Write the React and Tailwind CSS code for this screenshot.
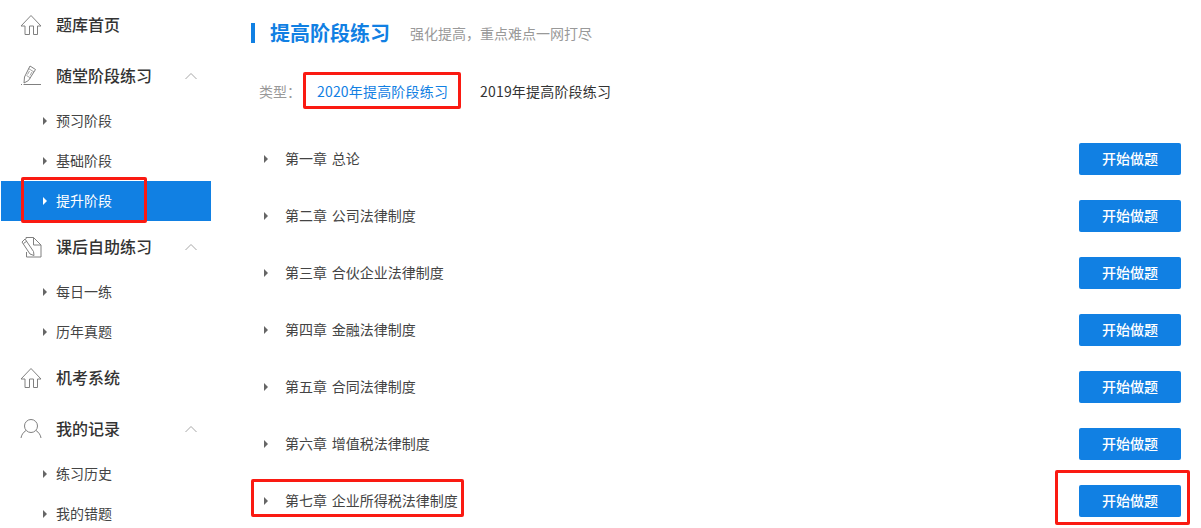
const font = { fontFamily: '"Noto Sans CJK SC", "Liberation Sans", sans-serif' };

function Home() {
  return (
    <svg width="22" height="22" viewBox="0 0 22 22" fill="none" stroke="#808080" strokeWidth="1">
      <path d="M11 1.500 1 12h4v8.500h4.500V12h4v8.500h4V12H21Z" />
    </svg>
  );
}
function Pen() {
  return (
    <svg width="22" height="22" viewBox="0 0 22 22" fill="none" stroke="#808080" strokeWidth="1">
      <path d="M10 1 15.500 4.500 8.500 15.500 4 18 4.500 12Z" />
      <path d="M8.500 3.500 14 7M6.500 10.500l4 2.500M9.500 6l-2 3.500M12 7l-2 3.500" strokeOpacity="0.7" />
      <path d="M1 19.500h1M3.500 19.500H21" />
    </svg>
  );
}
function Doc() {
  return (
    <svg width="22" height="22" viewBox="0 0 22 22" fill="none" stroke="#808080" strokeWidth="1">
      <path d="M6 3V1.500h7.500L21 9v12H6.500v-5" />
      <path d="M13.500 1.500V9H21" />
      <path d="M2 6l3-3 8.500 12.500.5 4-4-1.500Z" />
      <path d="M3.500 7.500 7 5" />
    </svg>
  );
}
function User() {
  return (
    <svg width="22" height="22" viewBox="0 0 22 22" fill="none" stroke="#808080" strokeWidth="1">
      <circle cx="11" cy="8" r="6.500" />
      <path d="M1 20c.5-3 2-5.500 5-7.500M21 20c-.5-3-2-5.500-5-7.500" />
    </svg>
  );
}
function Chevron() {
  return (
    <svg width="12" height="7" viewBox="0 0 12 7" fill="none" stroke="#a6a6a6" strokeWidth="1" className="absolute right-[14px] top-1/2 -translate-y-1/2">
      <path d="M.5 6.500 6 1l5.500 5.500" />
    </svg>
  );
}
function Caret({ white }) {
  return (
    <span className={`border-y-[4px] border-l-[4px] border-y-transparent ${white ? "border-l-white" : "border-l-[#666666]"}`} />
  );
}
function Head({ icon, text, open, h = "h-[51px]" }) {
  return (
    <div className={`relative flex ${h} items-center pl-[19px]`}>
      <span className="flex w-[36px]">{icon}</span>
      <span className="pb-[2px] text-[16px] font-medium text-[#333333]">{text}</span>
      {open && <Chevron />}
    </div>
  );
}
function Sub({ text, active }) {
  return (
    <div className={`flex h-10 items-center pl-[42px] text-[14px] ${active ? "bg-[#1180e3] text-white" : "text-[#444444]"}`}>
      <span className="flex w-[13px]"><Caret white={active} /></span>
      <span className="pb-[2px]">{text}</span>
    </div>
  );
}
const chapters = [
  "第一章 总论",
  "第二章 公司法律制度",
  "第三章 合伙企业法律制度",
  "第四章 金融法律制度",
  "第五章 合同法律制度",
  "第六章 增值税法律制度",
  "第七章 企业所得税法律制度",
];
function Mark({ className }) {
  return <div className={`pointer-events-none absolute rounded-[2px] border-[3px] border-[#fa1a12] ${className}`} />;
}

export default function App() {
  return (
    <div style={font} className="relative flex h-[528px] w-[1201px] overflow-hidden bg-white">
      <aside className="ml-px w-[210px] shrink-0">
        <Head icon={<Home />} text="题库首页" h="h-[50px]" />
        <Head icon={<Pen />} text="随堂阶段练习" open />
        <Sub text="预习阶段" />
        <Sub text="基础阶段" />
        <Sub text="提升阶段" active />
        <Head icon={<Doc />} text="课后自助练习" open />
        <Sub text="每日一练" />
        <Sub text="历年真题" />
        <Head icon={<Home />} text="机考系统" h="h-[52px]" />
        <Head icon={<User />} text="我的记录" open h="h-[50px]" />
        <Sub text="练习历史" />
        <Sub text="我的错题" />
      </aside>
      <main className="ml-10 flex-1 pr-5">
        <div className="mt-[23px] flex h-5 items-center">
          <span className="h-5 w-1 bg-[#1180e3]" />
          <h1 className="ml-[15px] text-[20px] font-bold text-[#1180e3]">提高阶段练习</h1>
          <span className="ml-[20px] text-[14px] text-[#999999]">强化提高，重点难点一网打尽</span>
        </div>
        <div className="mt-[28px] flex h-10 items-center">
          <span className="ml-2 w-[58px] text-[14px] text-[#999999]">类型：</span>
          <span className="text-[14px] tracking-[0.18px] text-[#1180e3]">2020年提高阶段练习</span>
          <span className="ml-[32px] text-[14px] tracking-[0.18px] text-[#333333]">2019年提高阶段练习</span>
        </div>
        <div className="mt-[32px] flex flex-col gap-[25px]">
          {chapters.map((c) => (
            <div key={c} className="flex h-8 items-center">
              <span className="ml-[13px] flex w-[21px]"><Caret /></span>
              <span className="pb-[2px] text-[14px] text-[#444444] [word-spacing:1.5px]">{c}</span>
              <button className="ml-auto h-8 w-[102px] rounded-[2px] bg-[#1180e3] pb-[1px] text-[14px] font-medium text-white">开始做题</button>
            </div>
          ))}
        </div>
      </main>
      <Mark className="left-[21px] top-[177px] h-[46px] w-[126px]" />
      <Mark className="left-[303px] top-[72px] h-[37px] w-[158px]" />
      <Mark className="left-[251px] top-[479px] h-[38px] w-[213px]" />
      <Mark className="left-[1055px] top-[470px] h-[55px] w-[135px]" />
    </div>
  );
}
